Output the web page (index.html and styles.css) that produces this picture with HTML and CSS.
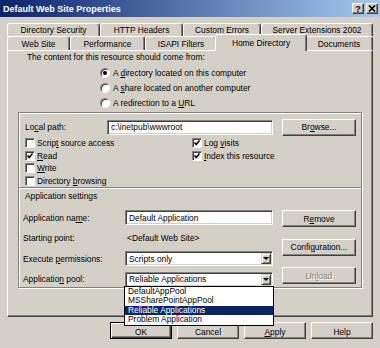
FILE: index.html
```html
<!DOCTYPE html>
<html lang="en">
<head>
    <meta charset="UTF-8">
    <title>Default Web Site Properties</title>
    <link rel="stylesheet" href="styles.css">
</head>
<body>
    <div class="window">
        <div class="titlebar">
            <span class="title">Default Web Site Properties</span>
            <div class="caption-btns">
                <span class="cap-btn">?</span>
                <span class="cap-btn">
                    <svg viewBox="0 0 8 7" width="8" height="7">
                        <line x1="1" y1="0.5" x2="7" y2="6.5"></line>
                        <line x1="7" y1="0.5" x2="1" y2="6.5"></line>
                    </svg>
                </span>
            </div>
        </div>

        <div class="tabs">
            <div class="tab-row row-back">
                <div class="tab">Directory Security</div>
                <div class="tab">HTTP Headers</div>
                <div class="tab">Custom Errors</div>
                <div class="tab">Server Extensions 2002</div>
            </div>
            <div class="tab-row row-front">
                <div class="tab">Web Site</div>
                <div class="tab">Performance</div>
                <div class="tab">ISAPI Filters</div>
                <div class="tab active">Home Directory</div>
                <div class="tab">Documents</div>
            </div>
        </div>

        <div class="panel">
            <p class="intro">The content for this resource should come from:</p>

            <div class="radios">
                <div class="radio-row"><span class="radio checked"></span><span>A <u>d</u>irectory located on this computer</span></div>
                <div class="radio-row"><span class="radio"></span><span>A <u>s</u>hare located on another computer</span></div>
                <div class="radio-row"><span class="radio"></span><span>A redirection to a <u>U</u>RL</span></div>
            </div>

            <div class="group">
                <div class="path-row">
                    <span class="path-label">Lo<u>c</u>al path:</span>
                    <span class="field path-field">c:\inetpub\wwwroot</span>
                    <span class="btn side-btn">Br<u>o</u>wse...</span>
                </div>

                <div class="checks">
                    <div class="check"><span class="box"></span><span>Scrip<u>t</u> source access</span></div>
                    <div class="check"><span class="box on"><svg viewBox="0 0 8 8"><polyline points="1.5 3.5 3.2 5.5 6.5 1.5"></polyline></svg></span><span>Log <u>v</u>isits</span></div>
                    <div class="check"><span class="box on"><svg viewBox="0 0 8 8"><polyline points="1.5 3.5 3.2 5.5 6.5 1.5"></polyline></svg></span><span><u>R</u>ead</span></div>
                    <div class="check"><span class="box on"><svg viewBox="0 0 8 8"><polyline points="1.5 3.5 3.2 5.5 6.5 1.5"></polyline></svg></span><span><u>I</u>ndex this resource</span></div>
                    <div class="check"><span class="box"></span><span><u>W</u>rite</span></div>
                    <div class="check"></div>
                    <div class="check"><span class="box"></span><span>Directory <u>b</u>rowsing</span></div>
                </div>

                <div class="etch"></div>
                <div class="section-title">Application settings</div>

                <div class="app-block">
                    <div class="app-rows">
                        <div class="app-row">
                            <span>Application na<u>m</u>e:</span>
                            <span class="field">Default Application</span>
                        </div>
                        <div class="app-row">
                            <span>Starting point:</span>
                            <span class="value">&lt;Default Web Site&gt;</span>
                        </div>
                        <div class="app-row">
                            <span>Execute <u>p</u>ermissions:</span>
                            <span class="field select">Scripts only<span class="drop-btn"></span></span>
                        </div>
                        <div class="app-row">
                            <span>Applicatio<u>n</u> pool:</span>
                            <div class="select-wrap">
                                <span class="field select">Reliable Applications<span class="drop-btn"></span></span>
                                <ul class="drop-list">
                                    <li>DefaultAppPool</li>
                                    <li>MSSharePointAppPool</li>
                                    <li class="sel">Reliable Applications</li>
                                    <li>Problem Application</li>
                                </ul>
                            </div>
                        </div>
                    </div>
                    <div class="side-btns">
                        <span class="btn">R<u>e</u>move</span>
                        <span class="btn">Confi<u>g</u>uration...</span>
                        <span class="btn disabled">Un<u>l</u>oad</span>
                    </div>
                </div>
            </div>
        </div>

        <div class="dialog-btns">
            <span class="btn default">OK</span>
            <span class="btn">Cancel</span>
            <span class="btn"><u>A</u>pply</span>
            <span class="btn">Help</span>
        </div>
    </div>
</body>
</html>
```

FILE: styles.css
```css
body {
    margin: 0;
    background-color: #d4d0c8;
    font-family: "Liberation Sans", Arial, sans-serif;
    font-size: 8.4px;
    color: #000;
}

.window {
    width: 380px;
    height: 348px;
    overflow: hidden;
}

/* title bar */
.titlebar {
    height: 17px;
    display: flex;
    align-items: center;
    padding: 0 2px 0 3px;
    background: linear-gradient(to right, #0a246a, #a6caf0);
    color: #fff;
}

.title {
    font-weight: bold;
    font-size: 9px;
}

.caption-btns {
    margin-left: auto;
    display: flex;
    gap: 2px;
}

.cap-btn {
    width: 12px;
    height: 11px;
    box-sizing: border-box;
    display: flex;
    align-items: center;
    justify-content: center;
    background-color: #d4d0c8;
    border: 1px solid;
    border-color: #fff #404040 #404040 #fff;
    box-shadow: inset -1px -1px 0 #808080;
    color: #000;
    font-weight: bold;
    font-size: 9px;
}

.cap-btn svg {
    stroke: #000;
    stroke-width: 1.6px;
}

/* tabs */
.tabs {
    margin: 6px 7px 0;
}

.tab-row {
    display: grid;
}

.row-back {
    height: 13px;
    grid-template-columns: 93px 83px 78px 112px;
}

.row-front {
    height: 14px;
    grid-template-columns: 63px 75px 72px 88px 68px;
}

.tab {
    box-sizing: border-box;
    display: flex;
    align-items: center;
    justify-content: center;
    background-color: #d4d0c8;
    border-top: 1px solid #fff;
    border-left: 1px solid #fff;
    border-right: 1px solid #404040;
    box-shadow: inset -1px 0 0 #808080;
    border-radius: 3px 3px 0 0;
    white-space: nowrap;
}

.tab.active {
    position: relative;
    z-index: 2;
    margin: -2px -2px -1px;
    padding-bottom: 1px;
}

/* tab page */
.panel {
    box-sizing: border-box;
    height: 267px;
    margin: 0 7px;
    border: 1px solid;
    border-color: #fff #404040 #404040 #fff;
    box-shadow: inset -1px -1px 0 #808080;
}

.intro {
    margin: 0 0 0 19px;
    height: 12px;
    line-height: 12px;
}

.radios {
    margin: 2px 0 0 92px;
}

.radio-row {
    display: flex;
    align-items: center;
    gap: 3px;
    height: 15px;
}

.radio {
    width: 10px;
    height: 10px;
    box-sizing: border-box;
    display: flex;
    align-items: center;
    justify-content: center;
    border-radius: 50%;
    background-color: #fff;
    border: 1px solid;
    border-color: #808080 #fff #fff #808080;
    box-shadow: inset 1px 1px 0 #404040;
}

.radio.checked::after {
    content: "";
    width: 4px;
    height: 4px;
    border-radius: 50%;
    background-color: #000;
}

.group {
    box-sizing: border-box;
    width: 344px;
    margin: 2px 0 0 10px;
    padding: 0 5px 0 4px;
    border: 1px solid #808080;
    box-shadow: inset 1px 1px 0 #fff, 1px 1px 0 #fff;
}

.path-row {
    display: flex;
    align-items: center;
    height: 16px;
    margin-top: 6px;
}

.path-label {
    width: 82px;
    padding-left: 2px;
}

.path-field {
    width: 166px;
    margin-right: 9px;
}

.side-btn {
    width: 74px;
}

.field {
    box-sizing: border-box;
    height: 15px;
    display: flex;
    align-items: center;
    padding: 0 1px 0 3px;
    background-color: #fff;
    border: 1px solid;
    border-color: #808080 #fff #fff #808080;
    box-shadow: inset 1px 1px 0 #404040, inset -1px -1px 0 #d4d0c8;
    white-space: nowrap;
}

.checks {
    display: grid;
    grid-template-columns: 167px 1fr;
    grid-auto-rows: 12.5px;
    margin-top: 2px;
    padding-left: 2px;
}

.check {
    display: flex;
    align-items: center;
    gap: 2px;
}

.box {
    width: 10px;
    height: 10px;
    box-sizing: border-box;
    display: flex;
    background-color: #fff;
    border: 1px solid;
    border-color: #808080 #fff #fff #808080;
    box-shadow: inset 1px 1px 0 #404040;
}

.box svg {
    width: 8px;
    height: 8px;
    fill: none;
    stroke: #000;
    stroke-width: 1.5px;
}

.etch {
    margin: 0 -5px 0 -4px;
    border-top: 1px solid #808080;
    border-bottom: 1px solid #fff;
}

.section-title {
    height: 14px;
    line-height: 14px;
    padding-left: 2px;
}

.app-block {
    display: flex;
    gap: 9px;
    margin-top: 7px;
}

.app-rows {
    width: 250px;
    display: flex;
    flex-direction: column;
    gap: 5.5px;
}

.app-row {
    display: grid;
    grid-template-columns: 102px 148px;
    align-items: center;
    height: 15px;
}

.value {
    padding-left: 2px;
}

.select {
    justify-content: space-between;
}

.drop-btn {
    width: 10px;
    height: 11px;
    box-sizing: border-box;
    display: flex;
    align-items: center;
    justify-content: center;
    background-color: #d4d0c8;
    border: 1px solid;
    border-color: #d4d0c8 #404040 #404040 #d4d0c8;
    box-shadow: inset 1px 1px 0 #fff, inset -1px -1px 0 #808080;
}

.drop-btn::after {
    content: "";
    border-left: 3px solid transparent;
    border-right: 3px solid transparent;
    border-top: 3px solid #000;
}

.select-wrap {
    position: relative;
}

.drop-list {
    position: absolute;
    top: 100%;
    left: -1px;
    z-index: 5;
    width: 150px;
    box-sizing: border-box;
    margin: -1px 0 0;
    padding: 0;
    list-style: none;
    background-color: #fff;
    border: 1px solid #000;
}

.drop-list li {
    height: 9.5px;
    line-height: 9.5px;
    padding-left: 3px;
}

.drop-list .sel {
    background-color: #0a246a;
    color: #fff;
}

.side-btns {
    width: 74px;
    display: flex;
    flex-direction: column;
    gap: 11.5px;
}

/* buttons */
.btn {
    box-sizing: border-box;
    height: 17px;
    display: flex;
    align-items: center;
    justify-content: center;
    background-color: #d4d0c8;
    border: 1px solid;
    border-color: #fff #404040 #404040 #fff;
    box-shadow: inset -1px -1px 0 #808080;
    white-space: nowrap;
}

.btn.disabled {
    color: #808080;
    text-shadow: 1px 1px 0 #fff;
}

.btn.default {
    border-color: #000;
    box-shadow: inset 1px 1px 0 #fff, inset -1px -1px 0 #404040, inset -2px -2px 0 #808080;
}

.dialog-btns {
    display: flex;
    justify-content: flex-end;
    gap: 5px;
    margin: 5px 7px 0 0;
}

.dialog-btns .btn {
    width: 62px;
    padding-top: 3px;
}
```
